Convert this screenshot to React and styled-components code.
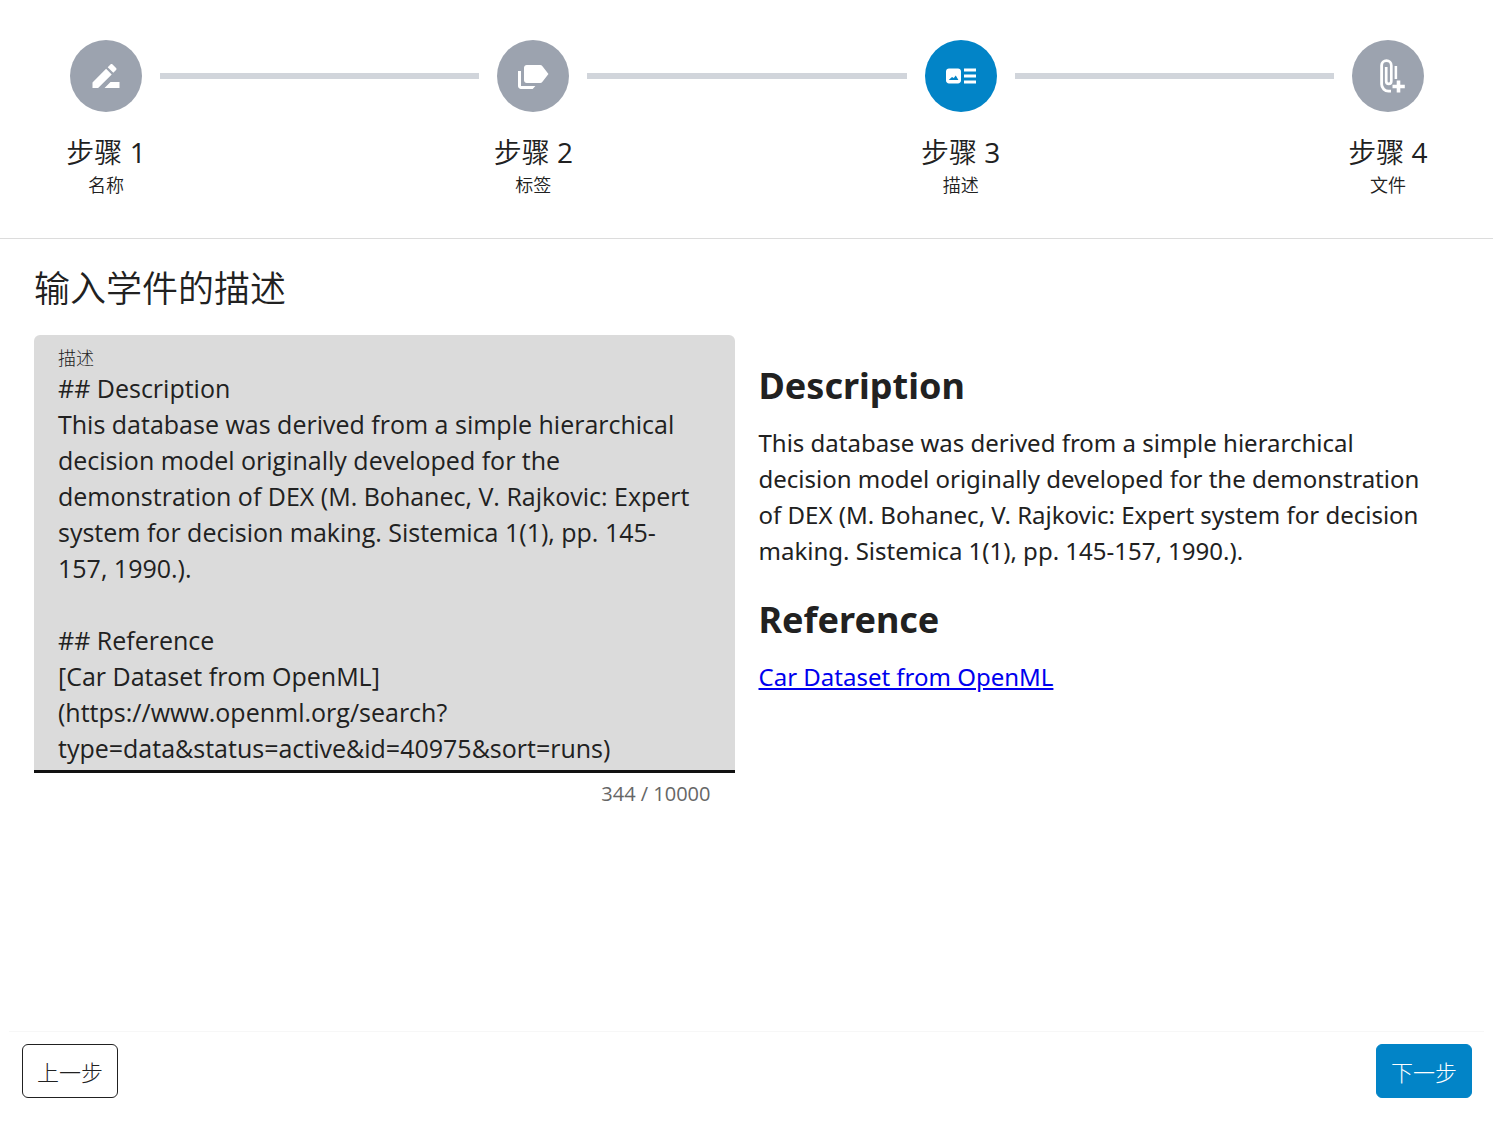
import React, { useState } from "react";
import styled, { createGlobalStyle } from "styled-components";

const GlobalStyle = createGlobalStyle`
  *, *::before, *::after { box-sizing: border-box; }
  body {
    margin: 0;
    background: #fff;
    color: #212121;
    font-family: "Open Sans", "Noto Sans CJK SC", sans-serif;
    font-size: 25px;
    line-height: 36px;
  }
`;

const Page = styled.div`
  min-height: 100vh;
  display: flex;
  flex-direction: column;
`;

const Stepper = styled.ol`
  display: flex;
  align-items: flex-start;
  gap: 14px;
  margin: 0;
  padding: 40px 65px 40px 66px;
  list-style: none;
  border-bottom: 1px solid #dcdcdc;
`;

const Step = styled.li`
  flex: none;
  width: 80px;
  display: flex;
  flex-direction: column;
  align-items: center;
  white-space: nowrap;
`;

const StepBadge = styled.span`
  width: 72px;
  height: 72px;
  margin-bottom: 20px;
  border-radius: 50%;
  display: grid;
  place-items: center;
  color: #fff;
  background: ${(p) => (p.$active ? "#0284c7" : "#9ca3af")};
`;

const StepIcon = styled.svg`
  width: 36px;
  height: 36px;
  fill: currentColor;
`;

const StepTitle = styled.span`
  font-size: 28px;
  line-height: 40px;
  font-weight: 350;
`;

const StepNumber = styled.span`
  font-weight: 400;
`;

const StepNote = styled.span`
  font-size: 18px;
  line-height: 26px;
  font-weight: 350;
`;

const Connector = styled.li`
  flex: 1;
  height: 6px;
  margin-top: 33px;
  background: #d1d5db;
`;

const Main = styled.main`
  flex: 1;
  padding: 24px 34px;
`;

const Heading = styled.h1`
  margin: 0 0 20px;
  font-size: 36px;
  line-height: 52px;
  font-weight: 350;
`;

const Columns = styled.div`
  display: grid;
  grid-template-columns: 1fr 1fr;
  gap: 24px;
`;

const Field = styled.div`
  display: flex;
  flex-direction: column;
  padding-top: 12px;
  border-radius: 6px 6px 0 0;
  border-bottom: 3px solid #111;
  background: #dbdbdb;
`;

const FieldLabel = styled.label`
  padding: 0 24px;
  font-size: 18px;
  line-height: 23px;
  font-weight: 300;
`;

const TextArea = styled.textarea`
  width: 100%;
  height: 400px;
  padding: 0 32px 0 24px;
  border: 0;
  outline: 0;
  resize: none;
  overflow: hidden;
  background: transparent;
  color: inherit;
  font: inherit;
`;

const Counter = styled.div`
  padding: 8px 24px;
  font-size: 20px;
  line-height: 26px;
  text-align: right;
  color: #666;
`;

const Preview = styled.section`
  padding: 24px 0;
  font-family: "Noto Sans", "Noto Sans CJK SC", sans-serif;
  font-size: 24px;
`;

const PreviewTitle = styled.h2`
  margin: 0 0 12px;
  font-size: 36px;
  line-height: 54px;
  font-weight: 700;
`;

const PreviewText = styled.p`
  margin: 0 0 24px;
  padding-right: 16px;
`;

const PreviewLink = styled.a`
  color: #0000ee;
`;

const Footer = styled.footer`
  display: flex;
  justify-content: space-between;
  margin: 0 9px;
  padding: 12px 12px 24px 13px;
  border-top: 1px solid #f7f7f7;
`;

const Button = styled.button`
  height: 54px;
  padding: 0 14px;
  border: 1px solid ${(p) => (p.$primary ? "#0284c7" : "#212121")};
  border-radius: 6px;
  background: ${(p) => (p.$primary ? "#0284c7" : "#fff")};
  color: ${(p) => (p.$primary ? "#fff" : "#212121")};
  font-family: inherit;
  font-size: 22px;
  font-weight: 300;
  cursor: pointer;
`;

const steps = [
  {
    note: "名称",
    path: "M15,16L11,20H21V16H15M12.06,7.19L3,16.25V20H6.75L15.81,10.94L12.06,7.19M18.71,8.04C19.1,7.65 19.1,7 18.71,6.63L16.37,4.29C16.17,4.09 15.92,4 15.66,4C15.41,4 15.15,4.1 14.96,4.29L13.13,6.12L16.88,9.87L18.71,8.04Z",
  },
  {
    note: "标签",
    path: "M7.8 4.7H16.8C17.4 4.7 17.9 5 18.3 5.5L22.3 10.7L18.3 15.9C17.9 16.4 17.4 16.7 16.8 16.7H7.8C6.8 16.7 6 15.9 6 14.9V6.5C6 5.5 6.8 4.7 7.8 4.7ZM2 8.7H4V18.7H13.6L11.8 20.7H4C2.9 20.7 2 19.8 2 18.7Z",
  },
  {
    note: "描述",
    active: true,
    path: "M22,13V11H14V13H22M22,7H14V9H22V7M14,17H22V15H14V17M12,9V15C12,16.11 11.11,17 10,17H4C2.89,17 2,16.11 2,15V9C2,7.89 2.89,7 4,7H10C11.11,7 12,7.89 12,9M10.3,14.6L8.5,11.6L7.2,13.4L6,12.6L3.8,14.6H10.3Z",
  },
  {
    note: "文件",
    path: "M11 .8A4.2 4.2 0 0 0 6.8 5V17.5A5.5 5.5 0 0 0 12.5 23H14V21.2H12.5A3.8 3.8 0 0 1 8.7 17.5V5A2.3 2.3 0 0 1 13.3 5V15.5A.8 .8 0 0 1 11.7 15.5V6H9.9V15.5A2.6 2.6 0 0 0 15.1 15.5V5A4.2 4.2 0 0 0 11 .8ZM16.4 5.3V14H18.1V5.3ZM17.8 15V17.8H15V20.2H17.8V23H20.2V20.2H23.2V17.8H20.2V15Z",
  },
];

const LIMIT = 10000;

const initialText = `## Description
This database was derived from a simple hierarchical decision model originally developed for the demonstration of DEX (M. Bohanec, V. Rajkovic: Expert system for decision making. Sistemica 1(1), pp. 145-157, 1990.).

## Reference
[Car Dataset from OpenML](https://www.openml.org/search?type=data&status=active&id=40975&sort=runs)`;

export default function App() {
  const [text, setText] = useState(initialText);

  return (
    <Page>
      <GlobalStyle />
      <Stepper>
        {steps.map((step, i) => (
          <React.Fragment key={step.note}>
            {i > 0 && <Connector aria-hidden="true" />}
            <Step aria-current={step.active ? "step" : undefined}>
              <StepBadge $active={step.active}>
                <StepIcon viewBox="0 0 24 24" aria-hidden="true">
                  <path d={step.path} />
                </StepIcon>
              </StepBadge>
              <StepTitle>
                步骤 <StepNumber>{i + 1}</StepNumber>
              </StepTitle>
              <StepNote>{step.note}</StepNote>
            </Step>
          </React.Fragment>
        ))}
      </Stepper>

      <Main>
        <Heading>输入学件的描述</Heading>
        <Columns>
          <div>
            <Field>
              <FieldLabel htmlFor="description">描述</FieldLabel>
              <TextArea
                id="description"
                maxLength={LIMIT}
                spellCheck={false}
                value={text}
                onChange={(e) => setText(e.target.value)}
              />
            </Field>
            <Counter>
              {text.length} / {LIMIT}
            </Counter>
          </div>
          <Preview>
            <PreviewTitle>Description</PreviewTitle>
            <PreviewText>
              This database was derived from a simple hierarchical decision
              model originally developed for the demonstration of DEX (M.
              Bohanec, V. Rajkovic: Expert system for decision making. Sistemica
              1(1), pp. 145-157, 1990.).
            </PreviewText>
            <PreviewTitle>Reference</PreviewTitle>
            <PreviewText>
              <PreviewLink href="https://www.openml.org/search?type=data&status=active&id=40975&sort=runs">
                Car Dataset from OpenML
              </PreviewLink>
            </PreviewText>
          </Preview>
        </Columns>
      </Main>

      <Footer>
        <Button type="button">上一步</Button>
        <Button type="button" $primary>
          下一步
        </Button>
      </Footer>
    </Page>
  );
}
